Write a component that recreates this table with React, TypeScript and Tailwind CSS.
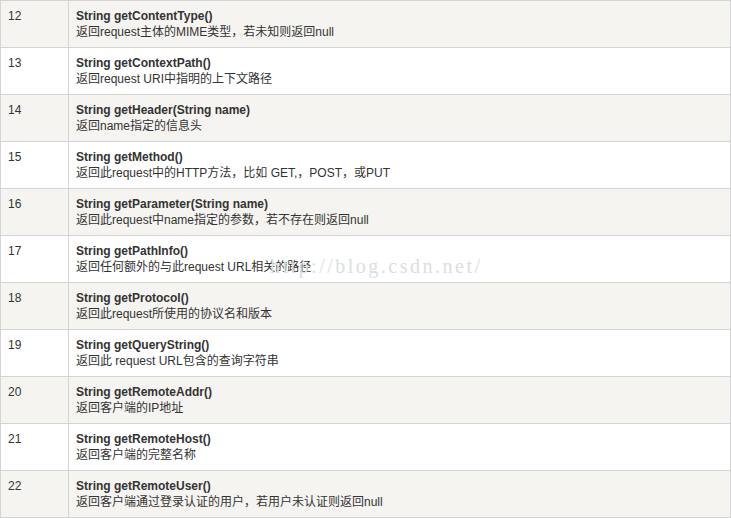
import React from "react"

const rows = [
  { n: 12, sig: "String getContentType()", desc: "返回request主体的MIME类型，若未知则返回null" },
  { n: 13, sig: "String getContextPath()", desc: "返回request URI中指明的上下文路径" },
  { n: 14, sig: "String getHeader(String name)", desc: "返回name指定的信息头" },
  { n: 15, sig: "String getMethod()", desc: "返回此request中的HTTP方法，比如 GET,，POST，或PUT" },
  { n: 16, sig: "String getParameter(String name)", desc: "返回此request中name指定的参数，若不存在则返回null" },
  { n: 17, sig: "String getPathInfo()", desc: "返回任何额外的与此request URL相关的路径" },
  { n: 18, sig: "String getProtocol()", desc: "返回此request所使用的协议名和版本" },
  { n: 19, sig: "String getQueryString()", desc: "返回此 request URL包含的查询字符串" },
  { n: 20, sig: "String getRemoteAddr()", desc: "返回客户端的IP地址" },
  { n: 21, sig: "String getRemoteHost()", desc: "返回客户端的完整名称" },
  { n: 22, sig: "String getRemoteUser()", desc: "返回客户端通过登录认证的用户，若用户未认证则返回null" },
]

const App = () => {
  return (
    <div
      className="relative w-[731px] bg-white text-[12px] leading-[16px] text-[#333]"
      style={{ fontFamily: '"Liberation Sans", Arial, "Noto Sans CJK SC", sans-serif' }}
    >
      <table className="w-[731px] table-fixed border-collapse">
        <colgroup>
          <col className="w-[68px]" />
          <col />
        </colgroup>
        <tbody>
          {rows.map((r, i) => (
            <tr key={r.n} className={i % 2 === 0 ? "bg-[#f5f4f0]" : "bg-white"}>
              <td className="h-[47px] border border-[#d4d4d4] px-[7px] py-[7px] align-top">{r.n}</td>
              <td className="h-[47px] border border-[#d4d4d4] px-[7px] py-[7px] align-top">
                <div className="font-bold">{r.sig}</div>
                <div>{r.desc}</div>
              </td>
            </tr>
          ))}
        </tbody>
      </table>

      {/* csdn watermark */}
      <div
        className="pointer-events-none absolute left-[270px] top-[254px] text-[20px] leading-[24px] tracking-[2.5px] text-[#dae0e0]"
        style={{ fontFamily: '"Liberation Serif", serif' }}
      >
        http://blog.csdn.net/
      </div>
    </div>
  )
}

export default App
